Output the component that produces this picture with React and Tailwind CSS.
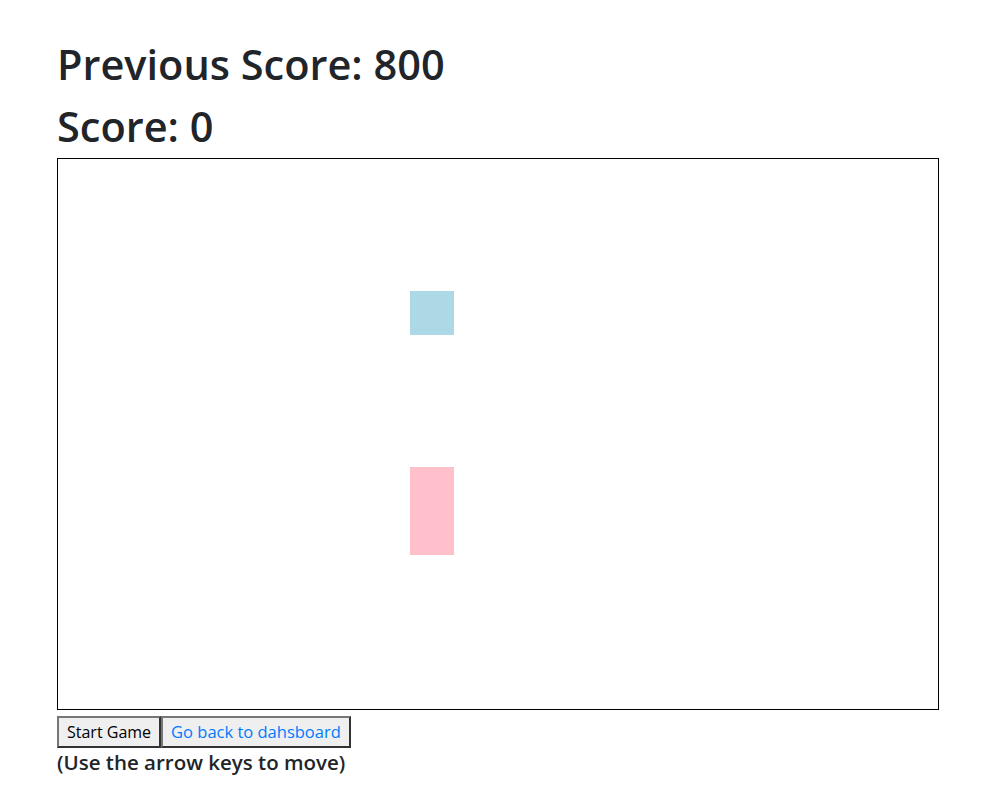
import React from 'react';

const App = () => {
  return (
    <div className="min-h-screen bg-white text-[#212529]" style={{ fontFamily: '"Open Sans", "Noto Sans", sans-serif' }}>
      <div className="pl-[57px] pt-[37px]">
        <h1 className="text-[41.5px] leading-[54px] font-semibold mb-[8px]">Previous Score: 800</h1>
        <h1 className="text-[41.5px] leading-[54px] font-semibold mb-[5px]">Score: 0</h1>

        <div className="w-[882px] h-[552px] border border-black flex flex-col items-start pl-[352px] pt-[132px]">
          <div className="w-[44px] h-[44px] bg-[#add8e6]"></div>
          <div className="w-[44px] h-[88px] bg-[#ffc0cb] mt-[132px]"></div>
        </div>

        <div className="flex mt-[6px]">
          <button className="h-[32px] px-[8px] bg-[#efefef] border-2 border-t-[#767676] border-l-[#767676] border-r-[#333333] border-b-[#333333] text-[16px] text-black">Start Game</button>
          <button className="h-[32px] px-[8px] bg-[#efefef] border-2 border-t-[#767676] border-l-[#767676] border-r-[#333333] border-b-[#333333] text-[16.5px] text-[#007bff]">Go back to dahsboard</button>
        </div>
        <h5 className="text-[20.5px] leading-[28px] font-semibold">(Use the arrow keys to move)</h5>
      </div>
    </div>
  );
};

export default App;
